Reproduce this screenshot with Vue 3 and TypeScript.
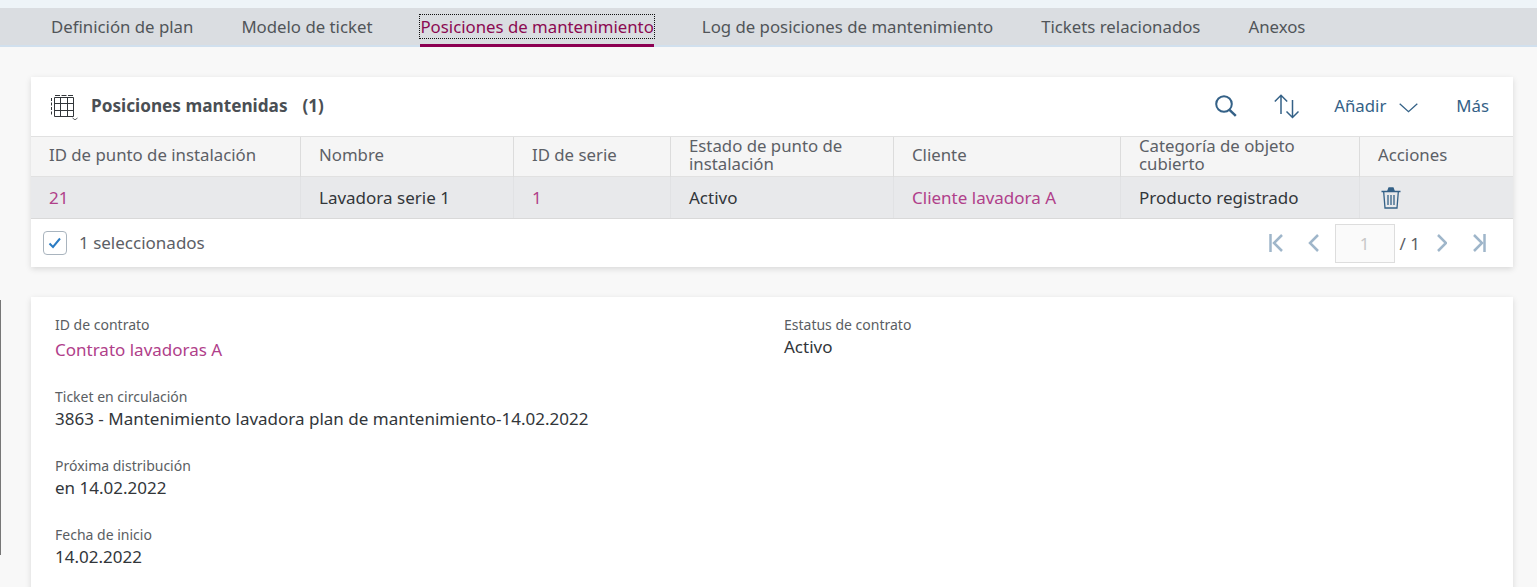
<script setup lang="ts">
const tabs = ['Definición de plan', 'Modelo de ticket', 'Posiciones de mantenimiento', 'Log de posiciones de mantenimiento', 'Tickets relacionados', 'Anexos']
const columns = ['ID de punto de instalación', 'Nombre', 'ID de serie', 'Estado de punto de instalación', 'Cliente', 'Categoría de objeto cubierto', 'Acciones']
</script>

<template>
  <div class="page">
    <div class="strip"></div>
    <nav class="tabs">
      <a v-for="(t, i) in tabs" :key="t" class="tab" :class="{ active: i === 2 }"><span>{{ t }}</span></a>
    </nav>
    <main class="content">
      <section class="card table-card">
        <header class="toolbar">
          <svg class="grid-icon" width="30" height="28" viewBox="0 0 30 28" fill="none" stroke="#32363a" stroke-width="1">
            <path d="M5.500 5.500h19v19h-19zM5.500 11.500h19M5.500 18.500h19M11.500 5.500v19M18.500 5.500v19" />
            <path d="M2.500 6v18" stroke-dasharray="3 1.500" />
            <path d="M6 3.500h18" stroke-dasharray="5 1.500" />
            <path d="M23.500 26l2.500 1.800 2.500-1.800" stroke-width=".8" />
          </svg>
          <h2 class="title">Posiciones mantenidas</h2>
          <span class="count">(1)</span>
          <div class="actions">
            <svg width="22" height="22" viewBox="0 0 22 22" fill="none" stroke="#346187" stroke-width="2">
              <circle cx="9" cy="9" r="7.800" />
              <path d="M14.500 14.800l6.300 6" stroke-width="2.500" />
            </svg>
            <svg class="sort" width="25" height="25" viewBox="0 0 25 25" fill="none" stroke="#346187" stroke-width="1.500">
              <path d="M7 20V1.500M.8 7.500l6.200-6.200 6.200 6.200" />
              <path d="M18.500 6v17.500M12.500 17.500l6 6 6-6" />
            </svg>
            <button class="link add">Añadir
              <svg class="chev" width="19" height="10" viewBox="0 0 19 10" fill="none" stroke="#346187" stroke-width="1.300"><path d="M.7 .7l8.800 8 8.800-8" /></svg>
            </button>
            <button class="link more">Más</button>
          </div>
        </header>
        <div class="grid head">
          <div v-for="c in columns" :key="c" class="cell">{{ c }}</div>
        </div>
        <div class="grid row">
          <div class="cell link-text">21</div>
          <div class="cell">Lavadora serie 1</div>
          <div class="cell link-text">1</div>
          <div class="cell">Activo</div>
          <div class="cell link-text">Cliente lavadora A</div>
          <div class="cell">Producto registrado</div>
          <div class="cell">
            <svg class="trash" width="20" height="22" viewBox="0 0 20 22" fill="none" stroke="#346187" stroke-width="1.300">
              <path d="M.5 4.500h19M2.700 5l1.300 16h12l1.300-16" />
              <path d="M7 8v10M10 8v10M13 8v10" stroke-width="1.300" />
              <path d="M7 3.500l1-2.500h4l1 2.500z" fill="#346187" />
            </svg>
          </div>
        </div>
        <footer class="foot">
          <span class="check">
            <svg width="14" height="12" viewBox="0 0 14 12" fill="none" stroke="#2b7cc4" stroke-width="2"><path d="M1.500 6.500l3.500 3.500 7-8.500" /></svg>
          </span>
          <span class="selected">1 seleccionados</span>
          <div class="pager">
            <svg width="14" height="18" viewBox="0 0 14 18" class="pg"><path d="M1.500 0v18" /><path d="M13 1L5 9l8 8" /></svg>
            <svg width="11" height="18" viewBox="0 0 11 18" class="pg prev"><path d="M10 1L2 9l8 8" /></svg>
            <span class="page-input">1</span>
            <span class="total">/ 1</span>
            <svg width="10" height="18" viewBox="0 0 10 18" class="pg next"><path d="M1 1l8 8-8 8" /></svg>
            <svg width="13" height="18" viewBox="0 0 13 18" class="pg last"><path d="M11.500 0v18" /><path d="M1 1l8 8-8 8" /></svg>
          </div>
        </footer>
      </section>

      <section class="card details">
        <div class="field contract">
          <label>ID de contrato</label>
          <a class="link-text big">Contrato lavadoras A</a>
        </div>
        <div class="field status">
          <label>Estatus de contrato</label>
          <p>Activo</p>
        </div>
        <div class="field wide">
          <label>Ticket en circulación</label>
          <p>3863 - Mantenimiento lavadora plan de mantenimiento-14.02.2022</p>
        </div>
        <div class="field wide">
          <label>Próxima distribución</label>
          <p>en 14.02.2022</p>
        </div>
        <div class="field wide">
          <label>Fecha de inicio</label>
          <p>14.02.2022</p>
        </div>
      </section>
    </main>
    <div class="edge"></div>
  </div>
</template>

<style>
html, body { margin: 0; padding: 0; background: #f8f8f8; overflow: hidden; }
</style>

<style scoped>
.page { position: relative; width: 1537px; height: 587px; overflow: hidden; background: #f8f8f8; font-family: "Noto Sans", Roboto, sans-serif; font-size: 17px; color: #32363a; }
.strip { height: 8px; background: #eef4f8; }
.tabs { display: flex; height: 37px; padding-left: 51px; gap: 48px; background: #dadde1; border-bottom: 2px solid #d1e0ee; font-size: 16.800px; }
.tab { display: block; height: 39px; box-sizing: border-box; color: #515559; line-height: 37px; position: relative; }
.tab span { display: block; }
.tab.active { color: #8c0a52; }
.tab.active::before { content: ""; position: absolute; inset: 6px -1px 8px -1px; outline: 1px dotted #111; outline-offset: -1px; }
.tab.active::after { content: ""; position: absolute; left: 0; right: 0; bottom: 0; height: 3px; background: #8c0052; }
.content { padding: 30px 24px 0 31px; display: flex; flex-direction: column; gap: 30px; }
.card { background: #fff; box-shadow: 0 2px 6px rgba(0, 0, 0, .13); }
.toolbar { display: flex; align-items: center; height: 59px; padding: 0 24px 1px 18px; box-sizing: border-box; }
.grid-icon { margin-right: 12px; flex: none; }
.title { margin: 0; padding-bottom: 2px; font-size: 17.200px; font-weight: 700; color: #4a4f54; }
.count { margin-left: 15px; padding-bottom: 2px; font-weight: 700; color: #4a4f54; }
.actions { margin-left: auto; display: flex; align-items: center; font-size: 16.800px; }
.sort { margin-left: 37px; }
.link { background: none; border: 0; padding: 0 0 2px; font: inherit; color: #346187; display: flex; align-items: center; }
.add { margin-left: 35px; gap: 13px; }
.chev { margin-top: 5px; }
.more { margin-left: 38px; }
.grid { display: grid; grid-template-columns: 270px 213px 157px 223px 227px 239px 1fr; }
.head { height: 41px; box-sizing: border-box; background: #f5f5f5; border-top: 1px solid #e1e1e1; border-bottom: 1px solid #e1e1e1; color: #5c6066; line-height: 18px; font-size: 16.800px; }
.head .cell { padding-bottom: 4px; }
.row { height: 42px; box-sizing: border-box; background: #e8e9eb; border-bottom: 1px solid #d9d9d9; color: #32363a; }
.cell { display: flex; align-items: center; padding: 0 18px; border-right: 1px solid #dcdcdc; box-sizing: border-box; }
.row .cell { border-right-color: #e1e2e4; }
.cell:last-child { border-right: 0; }
.head .cell:first-child, .row .cell:first-child { padding-right: 0; }
.link-text { color: #b0408a; text-decoration: none; }
.trash { margin-left: 3px; }
.foot { display: flex; align-items: center; height: 48px; padding: 0 27px 0 12px; box-sizing: border-box; color: #5c6066; }
.check { width: 22px; height: 22px; border: 1px solid #a9b4be; border-radius: 4px; display: flex; align-items: center; justify-content: center; }
.selected { margin-left: 12px; padding-bottom: 2px; }
.pager { margin-left: auto; display: flex; align-items: center; }
.pg { fill: none; stroke: #9fb6ca; stroke-width: 2.500; }
.prev { margin-left: 25px; margin-right: 16px; }
.page-input { width: 60px; height: 39px; box-sizing: border-box; border: 1px solid #dddddd; background: #fafafa; color: #c8c8c8; display: flex; align-items: center; justify-content: center; }
.total { margin-left: 5px; }
.next { margin-left: 17px; }
.last { margin-left: 26px; }
.details { flex: 1; height: 290px; padding: 20px 24px 0; box-sizing: border-box; display: grid; grid-template-columns: 729px 1fr; grid-template-rows: 72px 69px 69px 69px; align-content: start; }
.field { display: flex; flex-direction: column; }
.wide { grid-column: 1 / -1; }
.field label { font-size: 14px; line-height: 16px; color: #5a5e63; margin-bottom: 3px; }
.field p { margin: 0; line-height: 22px; color: #32363a; }
.big { line-height: 28px; }
.edge { position: absolute; left: 0; top: 300px; width: 1px; height: 255px; background: #777; }
</style>
